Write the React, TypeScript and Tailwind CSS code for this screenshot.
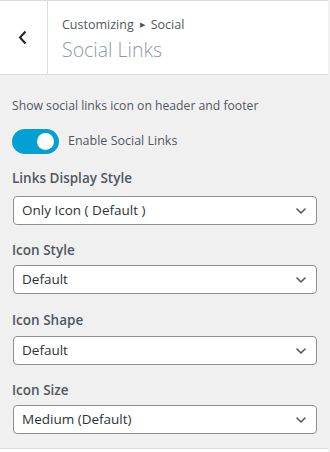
import React from "react";

const font = { fontFamily: '"Open Sans", "Noto Sans", "Liberation Sans", sans-serif' };

function Chevron() {
  return (
    <svg width="10" height="6" viewBox="0 0 10 6" className="shrink-0">
      <path d="M1 1 L5 5 L9 1" fill="none" stroke="#50575e" strokeWidth="1.6" strokeLinecap="round" strokeLinejoin="round" />
    </svg>
  );
}

function Select({ value }: { value: string }) {
  return (
    <div className="h-[29px] w-[304px] ml-[1px] bg-white border border-[#8c8f94] rounded-[4px] flex items-center justify-between pl-[8px] pr-[10px]">
      <span className="text-[13.5px] text-[#2c3338] leading-none">{value}</span>
      <Chevron />
    </div>
  );
}

function Label({ children, mt }: { children: React.ReactNode; mt: string }) {
  return <div className={`${mt} text-[13.5px] font-semibold text-[#50575e] leading-[20px]`}>{children}</div>;
}

export default function App() {
  return (
    <div className="w-[330px] h-[452px] bg-[#f0f0f1] overflow-hidden relative" style={font}>
      <div className="w-[328px]">
        <div className="h-[75px] bg-white border-t border-b border-[#dcdcde] flex">
          <div className="w-[48px] h-full border-r border-[#dcdcde] flex items-center justify-center">
            <svg width="10" height="15" viewBox="0 0 10 15" className="ml-[-2px]">
              <path d="M7.5 1.5 L2 7.5 L7.5 13.5" fill="none" stroke="#1d2327" strokeWidth="2" />
            </svg>
          </div>
          <div className="pl-[14px] pt-[14px]">
            <div className="text-[12.5px] text-[#50575e] leading-[20px] flex items-center">
              Customizing
              <span className="mx-[6px] text-[7px] text-[#50575e]">▶</span>
              Social
            </div>
            <div className="text-[19.5px] font-light text-[#8c99a6] leading-[26px] mt-[2px]">Social Links</div>
          </div>
        </div>
        <div className="px-[12px]">
          <div className="mt-[22px] text-[12.2px] text-[#50575e] leading-[18px]">Show social links icon on header and footer</div>
          <div className="mt-[14px] flex items-center h-[25px]">
            <div className="w-[47px] h-[25px] rounded-full bg-[#05a0d3] relative">
              <div className="absolute right-[5px] top-[4px] w-[17px] h-[17px] rounded-full bg-white" />
            </div>
            <span className="ml-[9px] text-[12.5px] text-[#50575e]">Enable Social Links</span>
          </div>
          <Label mt="mt-[14px]">Links Display Style</Label>
          <div className="mt-[8px]"><Select value="Only Icon ( Default )" /></div>
          <Label mt="mt-[15px]">Icon Style</Label>
          <div className="mt-[5px]"><Select value="Default" /></div>
          <Label mt="mt-[16px]">Icon Shape</Label>
          <div className="mt-[6px]"><Select value="Default" /></div>
          <Label mt="mt-[15px]">Icon Size</Label>
          <div className="mt-[5px]"><Select value="Medium (Default)" /></div>
        </div>
      </div>
      <div className="absolute left-0 top-[448px] w-[328px] h-[4px] bg-white border-t border-[#dcdcde]" />
    </div>
  );
}
